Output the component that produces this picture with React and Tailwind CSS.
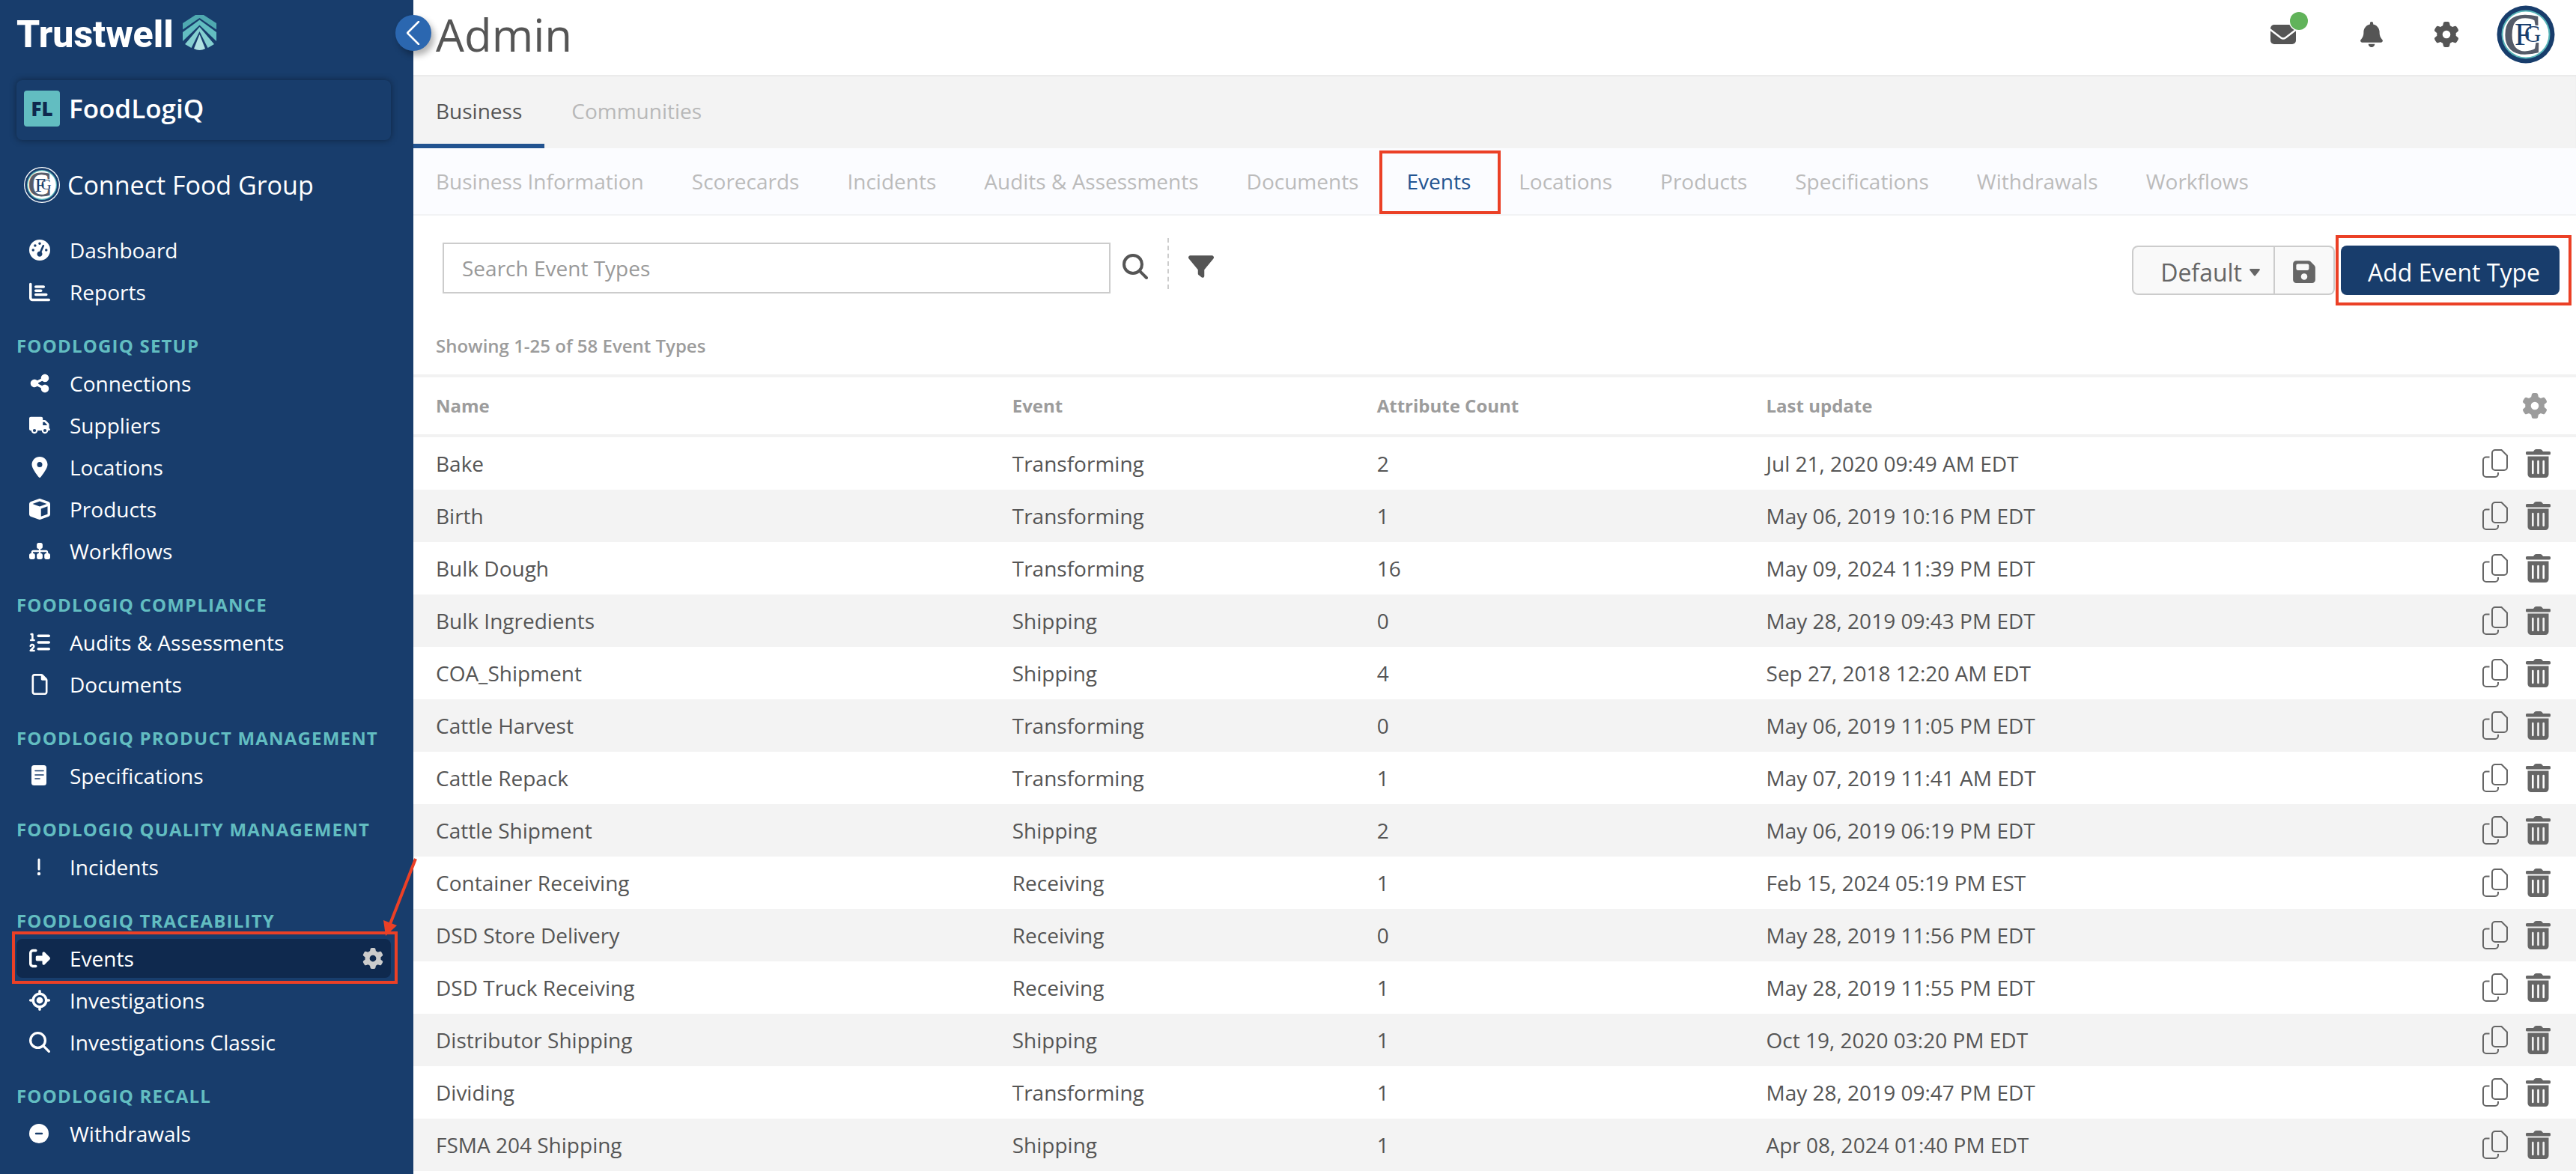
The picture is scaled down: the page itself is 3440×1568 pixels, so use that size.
import {
  FaGaugeHigh, FaChartBar, FaShareNodes, FaTruck, FaLocationDot, FaCube, FaSitemap, FaListOl, FaRegFile,
  FaRightFromBracket, FaLocationCrosshairs, FaGear, FaBell, FaFilter, FaFloppyDisk,
} from 'react-icons/fa6';

const NoteIcon = (props) => (
  <svg viewBox="0 0 28 28" fill="none" {...props}>
    <rect x="3" width="20" height="27" rx="3.5" fill="currentColor" />
    <path d="M8 7.500h11M8 13h11M8 18h6" stroke="#183d6c" strokeWidth="1.6" strokeLinecap="round" />
  </svg>
);

const AlertIcon = (props) => (
  <svg viewBox="0 0 28 28" fill="none" {...props}>
    <path d="M13 4v13" stroke="currentColor" strokeWidth="3" strokeLinecap="round" />
    <circle cx="13" cy="23" r="2.2" fill="currentColor" />
  </svg>
);

const SearchIcon = (props) => (
  <svg viewBox="0 0 34 34" fill="none" stroke="currentColor" strokeWidth="4" strokeLinecap="round" {...props}>
    <circle cx="14" cy="14" r="12" />
    <path d="M23 23l9 9" />
  </svg>
);

const MinusCircleIcon = (props) => (
  <svg viewBox="0 0 28 28" fill="none" {...props}>
    <circle cx="13" cy="14" r="13" fill="currentColor" />
    <path d="M9 14h8" stroke="#183d6c" strokeWidth="2.4" strokeLinecap="round" />
  </svg>
);

const CopyIcon = (props) => (
  <svg viewBox="0 0 34 38" fill="none" stroke="currentColor" strokeWidth="2" {...props}>
    <path d="M17 1h8.500l7.500 7.500v15.500a4 4 0 0 1-4 4h-12a4 4 0 0 1-4-4v-19a4 4 0 0 1 4-4z" />
    <path d="M9.500 10.500h-4.500a4 4 0 0 0-4 4v18.500a4 4 0 0 0 4 4h12a4 4 0 0 0 4-4v-2" />
  </svg>
);

const TrashIcon = (props) => (
  <svg viewBox="0 0 33 38" fill="currentColor" {...props}>
    <path d="M2 3h8l1.500-2q1-1 2.500-1h5q1.500 0 2.500 1l1.500 2h8a2 2 0 0 1 0 4.500h-29a2 2 0 0 1 0-4.500z" />
    <path
      fillRule="evenodd"
      d="M2.500 9.500h28v24a4.500 4.500 0 0 1-4.500 4.500h-19a4.500 4.500 0 0 1-4.500-4.500zM8 16v16a1.300 1.300 0 0 0 2.600 0v-16a1.300 1.300 0 0 0-2.600 0zM15.200 16v16a1.300 1.300 0 0 0 2.600 0v-16a1.300 1.300 0 0 0-2.600 0zM22.400 16v16a1.300 1.300 0 0 0 2.600 0v-16a1.300 1.300 0 0 0-2.600 0z"
    />
  </svg>
);

const MailIcon = (props) => (
  <svg viewBox="0 0 52 56" fill="none" {...props}>
    <rect y="15" width="34" height="26" rx="5" fill="#555" />
    <path d="M-1 21l15 11.500q3 2 6 0l15-11.500" stroke="#fff" strokeWidth="2.4" />
    <circle cx="38" cy="10" r="13.500" fill="#fff" />
    <circle cx="38" cy="10" r="12" fill="#61b35a" />
  </svg>
);

const TreeMark = (props) => (
  <svg viewBox="0 0 45 47" {...props}>
    <path d="M17 0h11l17 11v8.500L22.500 4 0 19.500V11z" fill="#4fa9b0" />
    <path d="M22.500 6.500L45 23v12L22.500 13.500 0 35V23z" fill="#62bdc1" />
    <path d="M22.500 16L42 39l-8.500 5-11-22-11 22L3 39z" fill="#84cfd0" />
    <path d="M22.500 26L30 45q-7.500 4-15 0z" fill="#b0e2e2" />
  </svg>
);

// Round company seal
const Seal = ({ ring, className }) => (
  <svg viewBox="0 0 78 78" fontFamily="Liberation Serif, serif" aria-hidden="true" className={`overflow-visible ${className}`}>
    {ring && <circle cx="39" cy="39" r="39" fill="#fff" />}
    <circle cx="39" cy="39" r={ring ? 37 : 38.5} fill="#183d6c" />
    <circle cx="39" cy="39" r="32.500" fill="#57b4b8" />
    <circle cx="39" cy="39" r="30.500" fill="#fff" />
    <text x="9" y="64" fontSize="76" fill="#555b69" stroke="#555b69" strokeWidth="1.5">C</text>
    <text x="24" y="53" fontSize="42" fill="#183d6c">F</text>
    <text x="37" y="49" fontSize="31" fill="#183d6c">G</text>
  </svg>
);

const sections = [
  {
    items: [
      { label: 'Dashboard', icon: FaGaugeHigh },
      { label: 'Reports', icon: FaChartBar },
    ],
  },
  {
    title: 'FOODLOGIQ SETUP',
    items: [
      { label: 'Connections', icon: FaShareNodes },
      { label: 'Suppliers', icon: FaTruck },
      { label: 'Locations', icon: FaLocationDot },
      { label: 'Products', icon: FaCube },
      { label: 'Workflows', icon: FaSitemap },
    ],
  },
  {
    title: 'FOODLOGIQ COMPLIANCE',
    items: [
      { label: 'Audits & Assessments', icon: FaListOl },
      { label: 'Documents', icon: FaRegFile },
    ],
  },
  { title: 'FOODLOGIQ PRODUCT MANAGEMENT', items: [{ label: 'Specifications', icon: NoteIcon }] },
  { title: 'FOODLOGIQ QUALITY MANAGEMENT', items: [{ label: 'Incidents', icon: AlertIcon }] },
  {
    title: 'FOODLOGIQ TRACEABILITY',
    items: [
      { label: 'Events', icon: FaRightFromBracket, active: true },
      { label: 'Investigations', icon: FaLocationCrosshairs },
      { label: 'Investigations Classic', icon: SearchIcon },
    ],
  },
  { title: 'FOODLOGIQ RECALL', items: [{ label: 'Withdrawals', icon: MinusCircleIcon }] },
];

const subTabs = [
  'Business Information', 'Scorecards', 'Incidents', 'Audits & Assessments', 'Documents', 'Events',
  'Locations', 'Products', 'Specifications', 'Withdrawals', 'Workflows',
];

const rows = [
  ['Bake', 'Transforming', 2, 'Jul 21, 2020 09:49 AM EDT'],
  ['Birth', 'Transforming', 1, 'May 06, 2019 10:16 PM EDT'],
  ['Bulk Dough', 'Transforming', 16, 'May 09, 2024 11:39 PM EDT'],
  ['Bulk Ingredients', 'Shipping', 0, 'May 28, 2019 09:43 PM EDT'],
  ['COA_Shipment', 'Shipping', 4, 'Sep 27, 2018 12:20 AM EDT'],
  ['Cattle Harvest', 'Transforming', 0, 'May 06, 2019 11:05 PM EDT'],
  ['Cattle Repack', 'Transforming', 1, 'May 07, 2019 11:41 AM EDT'],
  ['Cattle Shipment', 'Shipping', 2, 'May 06, 2019 06:19 PM EDT'],
  ['Container Receiving', 'Receiving', 1, 'Feb 15, 2024 05:19 PM EST'],
  ['DSD Store Delivery', 'Receiving', 0, 'May 28, 2019 11:56 PM EDT'],
  ['DSD Truck Receiving', 'Receiving', 1, 'May 28, 2019 11:55 PM EDT'],
  ['Distributor Shipping', 'Shipping', 1, 'Oct 19, 2020 03:20 PM EDT'],
  ['Dividing', 'Transforming', 1, 'May 28, 2019 09:47 PM EDT'],
  ['FSMA 204 Shipping', 'Shipping', 1, 'Apr 08, 2024 01:40 PM EDT'],
];

function NavItem({ item }) {
  const Icon = item.icon;
  return (
    <li className={`relative flex h-[52px] items-center rounded-lg ${item.active ? 'bg-[#0f294e]' : ''}`}>
      <a href="#" className="flex flex-1 items-center pl-[17px]">
        <span className="w-[54px]">
          <Icon className="h-7 w-auto max-w-8 min-w-7" />
        </span>
        {item.label}
      </a>
      {item.active && (
        <>
          <button aria-label="Event settings" className="mr-2.5">
            <FaGear className="size-7 text-[#ccc]" />
          </button>
          <div className="pointer-events-none absolute -top-2.5 -right-[9px] -bottom-2 -left-1.5 border-4 border-[#eb4026]" />
          <svg className="pointer-events-none absolute -top-[110px] -right-[42px] h-[110px] w-16" viewBox="0 0 64 110">
            <path d="M55 3L21 90" stroke="#eb4026" strokeWidth="4" />
            <path d="M15 106l-3-21 18 7z" fill="#eb4026" />
          </svg>
        </>
      )}
    </li>
  );
}

function Sidebar() {
  return (
    <aside className="relative z-10 w-[552px] shrink-0 bg-[#183d6c] pr-[30px] pl-[22px] text-[28px] text-white">
      <div className="flex h-[107px] items-start gap-3 pt-4">
        <span className="font-['Roboto'] text-[50px] leading-[60px] font-extrabold">Trustwell</span>
        <TreeMark className="mt-1 h-[47px] w-[45px]" />
      </div>
      <button aria-label="Collapse menu" className="absolute top-5 -right-6 flex size-12 items-center justify-center rounded-full bg-[#2b67b0] shadow-[4px_6px_8px_rgba(0,0,0,0.3)]">
        <svg className="h-8 w-[18px]" viewBox="0 0 18 32" fill="none" stroke="#fff" strokeWidth="2.5" strokeLinecap="round" strokeLinejoin="round">
          <path d="M16 1L1 16l15 15" />
        </svg>
      </button>

      <button className="flex h-20 w-full items-center gap-3 rounded-lg px-2.5 pb-1 text-[35px] font-semibold shadow-[0_0_10px_rgba(0,0,0,0.4)]">
        <span className="flex size-12 items-center justify-center rounded bg-[#62bdc1] text-[26px] font-extrabold text-[#0f294e]">FL</span>
        FoodLogiQ
      </button>
      <div className="mt-9 flex h-12 items-center gap-2.5 px-2.5 text-[34px]">
        <Seal ring className="size-12" />
        Connect Food Group
      </div>

      <nav className="mt-[35px]">
        {sections.map((section, i) => (
          <div key={i}>
            {section.title && (
              <h2 className="pt-7 pb-1.5 text-[24px] leading-8 font-bold tracking-wider whitespace-nowrap text-[#62bdc1]">{section.title}</h2>
            )}
            <ul className="flex flex-col gap-1 py-0.5">
              {section.items.map((item) => <NavItem key={item.label} item={item} />)}
            </ul>
          </div>
        ))}
      </nav>
    </aside>
  );
}

function Header() {
  return (
    <header className="flex h-[100px] items-center justify-between pr-7 pb-2 pl-[30px]">
      <h1 className="text-[60px] leading-none text-[#555]">Admin</h1>
      <div className="flex items-center text-[#555]">
        <button aria-label="Messages"><MailIcon className="h-14 w-[52px] overflow-visible" /></button>
        <button aria-label="Notifications" className="ml-[66px]"><FaBell className="size-[34px]" /></button>
        <button aria-label="Settings" className="ml-[66px]"><FaGear className="size-[34px]" /></button>
        <button aria-label="Account" className="ml-[50px]"><Seal className="size-[78px]" /></button>
      </div>
    </header>
  );
}

function Toolbar() {
  return (
    <div className="flex items-start pt-9 pr-[22px] pl-[39px]">
      <input
        type="text"
        aria-label="Search Event Types"
        placeholder="Search Event Types"
        className="h-[68px] w-[892px] border-2 border-[#ccc] px-6 placeholder:text-[#999]"
      />
      <button aria-label="Search" className="mt-[15px] ml-4"><SearchIcon className="size-[34px]" /></button>
      <div className="-mt-1.5 ml-[26px] h-[68px] border-l-2 border-dashed border-[#ccc]" />
      <button aria-label="Filter" className="mt-[15px] ml-[26px]"><FaFilter className="size-[34px]" /></button>
      <div className="mt-1 ml-auto flex h-[66px] text-[32px] text-[#666]">
        <button className="flex items-center gap-2.5 rounded-l-lg border-2 border-[#ccc] bg-[#f9f9f9] pt-1.5 pr-[18px] pl-9">
          Default
          <svg className="h-2.5 w-3.5" viewBox="0 0 14 10" fill="currentColor">
            <path d="M1 0h12q1.500 .5.500 2L8 9q-1 1-2 0L.500 2Q-.5.500 1 0z" />
          </svg>
        </button>
        <button aria-label="Save view" className="flex w-20 items-center justify-center rounded-r-lg border-2 border-l-0 border-[#ccc] bg-[#f9f9f9] pt-1">
          <FaFloppyDisk className="size-[34px]" />
        </button>
        <div className="relative ml-2">
          <button className="h-full rounded-lg bg-[#183d6c] pt-1.5 pr-[26px] pl-9 text-white">Add Event Type</button>
          <div className="pointer-events-none absolute -top-3.5 -right-4 -bottom-3.5 -left-[7px] border-4 border-[#eb4026]" />
        </div>
      </div>
    </div>
  );
}

function EventTable() {
  return (
    <table className="w-full table-fixed border-separate border-spacing-0 text-left">
      <thead className="text-[24px] text-[#9c9c9c]">
        <tr className="h-[84px] *:border-y-4 *:border-[#f2f2f2] *:font-bold">
          <th className="w-[27%] pl-[30px]">Name</th>
          <th className="w-[17%] pl-5">Event</th>
          <th className="w-[18%] pl-4">Attribute Count</th>
          <th className="pl-4">Last update</th>
          <th className="w-[200px] pr-[38px]">
            <button aria-label="Table settings" className="ml-auto block"><FaGear className="size-[34px]" /></button>
          </th>
        </tr>
      </thead>
      <tbody className="text-[#555]">
        {rows.map(([name, event, count, updated]) => (
          <tr key={name} className="h-[70px] even:bg-[#f3f3f3]">
            <td className="pl-[30px]">{name}</td>
            <td className="pl-5">{event}</td>
            <td className="pl-4">{count}</td>
            <td className="pl-4">{updated}</td>
            <td className="pr-[34px]">
              <div className="flex justify-end gap-6 text-[#666]">
                <button aria-label={`Copy ${name}`}><CopyIcon className="h-[38px] w-[34px]" /></button>
                <button aria-label={`Delete ${name}`}><TrashIcon className="h-[38px] w-[33px]" /></button>
              </div>
            </td>
          </tr>
        ))}
      </tbody>
    </table>
  );
}

export default function App() {
  return (
    <div className="flex min-h-screen bg-white font-['Open_Sans',sans-serif] text-[28px] text-[#555]">
      <Sidebar />
      <main className="min-w-0 flex-1">
        <Header />
        <div className="flex h-[98px] gap-1.5 bg-[#f3f3f3] shadow-[inset_0_2px_2px_rgba(0,0,0,0.04)]">
          <a href="#" className="flex items-center border-b-[6px] border-[#225390] px-[30px] pt-1">Business</a>
          <a href="#" className="flex items-center border-b-[6px] border-transparent px-[30px] pt-1 text-[#b8b8b8]">Communities</a>
        </div>
        <nav className="flex h-[90px] gap-1 border-b-2 border-[#f2f3f5] bg-[#fbfcff] text-[#bbb]">
          {subTabs.map((tab) => (
            <a key={tab} href="#" className={`relative flex items-center px-[30px] whitespace-nowrap ${tab === 'Events' ? 'text-[#225390]' : ''}`}>
              {tab}
              {tab === 'Events' && <span className="absolute top-[3px] -right-2.5 bottom-0 -left-1.5 border-4 border-[#eb4026]" />}
            </a>
          ))}
        </nav>
        <Toolbar />
        <p className="px-[30px] pt-[52px] pb-[22px] text-[24px] leading-8 font-semibold text-[#9c9c9c]">Showing 1-25 of 58 Event Types</p>
        <EventTable />
      </main>
    </div>
  );
}
